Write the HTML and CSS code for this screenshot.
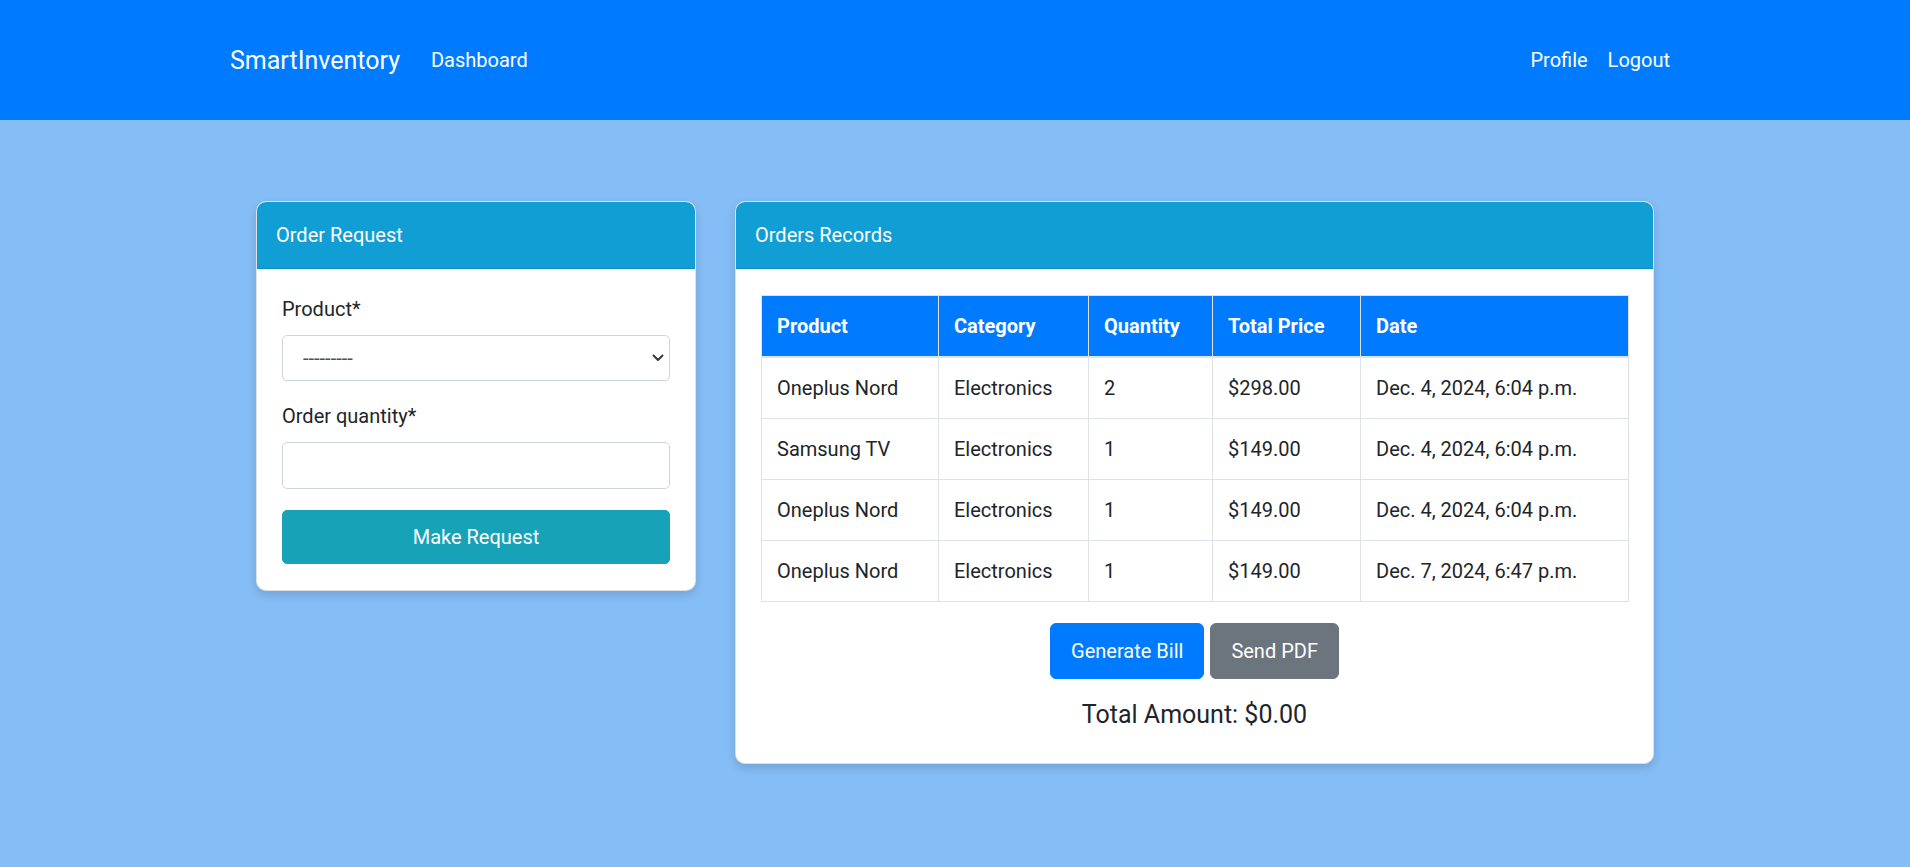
FILE: index.html
```html
<!DOCTYPE html>
<html lang="en">
<head>
<meta charset="utf-8">
<title>SmartInventory</title>
<link rel="stylesheet" href="styles.css">
</head>
<body>
<nav class="navbar">
  <div class="nav-inner">
    <a class="brand" href="#">SmartInventory</a>
    <a class="nav-link" href="#">Dashboard</a>
    <div class="nav-right">
      <a class="nav-link" href="#">Profile</a>
      <a class="nav-link" href="#">Logout</a>
    </div>
  </div>
</nav>

<main class="content">
  <section class="card card-left">
    <div class="card-header">Order Request</div>
    <form class="card-body">
      <label class="form-label" for="product">Product*</label>
      <div class="select-wrap">
        <select id="product" class="form-select">
          <option>---------</option>
        </select>
        <svg class="chevron" width="12" height="8" viewBox="0 0 12 8"><path d="M1.5 1.5 L6 6 L10.5 1.5" fill="none" stroke="#343a40" stroke-width="2" stroke-linecap="round" stroke-linejoin="round"/></svg>
      </div>
      <label class="form-label" for="qty">Order quantity*</label>
      <input id="qty" class="form-input" type="text">
      <button type="button" class="btn btn-teal">Make Request</button>
    </form>
  </section>

  <section class="card card-right">
    <div class="card-header">Orders Records</div>
    <div class="card-body body-right">
      <table class="orders">
        <colgroup>
          <col class="c1"><col class="c2"><col class="c3"><col class="c4"><col class="c5">
        </colgroup>
        <thead>
          <tr><th>Product</th><th>Category</th><th>Quantity</th><th>Total Price</th><th>Date</th></tr>
        </thead>
        <tbody>
          <tr><td>Oneplus Nord</td><td>Electronics</td><td>2</td><td>$298.00</td><td>Dec. 4, 2024, 6:04 p.m.</td></tr>
          <tr><td>Samsung TV</td><td>Electronics</td><td>1</td><td>$149.00</td><td>Dec. 4, 2024, 6:04 p.m.</td></tr>
          <tr><td>Oneplus Nord</td><td>Electronics</td><td>1</td><td>$149.00</td><td>Dec. 4, 2024, 6:04 p.m.</td></tr>
          <tr><td>Oneplus Nord</td><td>Electronics</td><td>1</td><td>$149.00</td><td>Dec. 7, 2024, 6:47 p.m.</td></tr>
        </tbody>
      </table>
      <div class="actions">
        <button type="button" class="btn btn-blue">Generate Bill</button>
        <button type="button" class="btn btn-gray">Send PDF</button>
      </div>
      <h5 class="total">Total Amount: $0.00</h5>
    </div>
  </section>
</main>
</body>
</html>
```

FILE: styles.css
```css
* { box-sizing: border-box; }

html, body {
  margin: 0;
  padding: 0;
}

body {
  background: #85bdf6;
  font-family: Roboto, "Liberation Sans", Arial, sans-serif;
  font-size: 20px;
  line-height: 30px;
  color: #212529;
  min-height: 867px;
}

a { text-decoration: none; }

.navbar {
  background: #007bff;
  height: 120px;
}

.nav-inner {
  width: 1450px;
  height: 100%;
  margin: 0 auto;
  display: flex;
  align-items: center;
}

.brand {
  color: #fff;
  font-size: 25px;
  line-height: 37px;
  margin-right: 21px;
}

.nav-link {
  color: #fff;
  font-size: 20px;
  line-height: 30px;
  padding: 0 10px;
}

.nav-right {
  margin-left: auto;
  display: flex;
}

.content {
  width: 1398px;
  margin: 81px auto 0;
  display: flex;
  align-items: flex-start;
  gap: 39px;
}

.card {
  background: #fff;
  border: 1px solid rgba(0, 0, 0, 0.12);
  border-radius: 10px;
  overflow: hidden;
  box-shadow: 0 4px 10px rgba(0, 0, 0, 0.14);
}

.card-left { width: 440px; }
.card-right { width: 919px; }

.card-header {
  background: #109ed5;
  color: #fff;
  height: 67px;
  border-bottom: 1px solid rgba(0, 0, 0, 0.1);
  padding: 0 19px;
  display: flex;
  align-items: center;
  font-size: 20px;
}

.card-body {
  padding: 25px 25px 26px;
  display: flex;
  flex-direction: column;
  margin: 0;
}

.form-label {
  display: block;
  line-height: 30px;
  margin-bottom: 11px;
  color: #212529;
}

.select-wrap {
  position: relative;
  margin-bottom: 20px;
}

.form-select {
  appearance: none;
  -webkit-appearance: none;
  width: 100%;
  height: 46px;
  border: 1px solid #ced4da;
  border-radius: 5px;
  background: #fff;
  font-family: Roboto, "Liberation Sans", Arial, sans-serif;
  font-size: 20px;
  color: #495057;
  padding: 0 40px 0 20px;
  margin: 0;
}

.chevron {
  position: absolute;
  right: 6px;
  top: 19px;
}

.form-input {
  width: 100%;
  height: 47px;
  border: 1px solid #ced4da;
  border-radius: 5px;
  background: #fff;
  font-size: 20px;
  padding: 0 15px;
  margin: 0 0 21px;
}

.btn {
  font-family: Roboto, "Liberation Sans", Arial, sans-serif;
  font-size: 20px;
  line-height: 30px;
  color: #fff;
  border: 1px solid transparent;
  border-radius: 6px;
  cursor: pointer;
}

.btn-teal {
  background: #17a2b8;
  border-color: #17a2b8;
  height: 54px;
  width: 100%;
  border-radius: 5px;
}

.body-right {
  padding: 26px 25px 25px;
}

.orders {
  width: 867px;
  border-collapse: collapse;
  table-layout: fixed;
}

.orders .c1 { width: 177px; }
.orders .c2 { width: 150px; }
.orders .c3 { width: 124px; }
.orders .c4 { width: 148px; }
.orders .c5 { width: 268px; }

.orders th,
.orders td {
  border: 1px solid #dee2e6;
  padding: 15px 15px;
  text-align: left;
  line-height: 30px;
  white-space: nowrap;
}

.orders th {
  background: #007bff;
  color: #fff;
  font-weight: 700;
  border-bottom-width: 2px;
}

.orders td {
  color: #212529;
}

.actions {
  margin-top: 21px;
  display: flex;
  justify-content: center;
  gap: 6px;
}

.actions .btn {
  height: 56px;
  padding: 0 20px;
}

.btn-blue { background: #007bff; border-color: #007bff; }
.btn-gray { background: #6c757d; border-color: #6c757d; }

.total {
  margin: 21px 0 8px;
  text-align: center;
  font-size: 25px;
  line-height: 30px;
  font-weight: 400;
  color: #212529;
}
```
